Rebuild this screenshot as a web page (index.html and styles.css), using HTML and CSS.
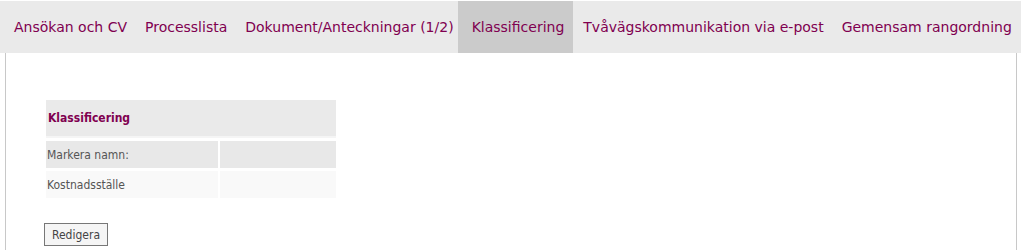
FILE: index.html
```html
<!DOCTYPE html>
<html lang="sv">
<head>
<meta charset="utf-8">
<title>Klassificering</title>
<link rel="stylesheet" href="styles.css">
</head>
<body>
<nav class="tabs">
  <a class="tab">Ansökan och CV</a>
  <a class="tab">Processlista</a>
  <a class="tab">Dokument/Anteckningar (1/2)</a>
  <a class="tab active">Klassificering</a>
  <a class="tab">Tvåvägskommunikation via e-post</a>
  <a class="tab">Gemensam rangordning</a>
</nav>
<main class="panel">
  <div class="box">
    <div class="box-head">Klassificering</div>
    <table class="grid">
      <tr class="odd"><td class="label">Markera namn:</td><td class="value"></td></tr>
      <tr class="even"><td class="label">Kostnadsställe</td><td class="value"></td></tr>
    </table>
  </div>
  <button class="btn" type="button">Redigera</button>
</main>
</body>
</html>
```
FILE: styles.css
```css
html, body {
  margin: 0;
  padding: 0;
  background: #fff;
}
body {
  font-family: "DejaVu Sans Condensed", "DejaVu Sans", sans-serif;
  padding-top: 1px;
}
.tabs {
  display: flex;
  height: 52px;
  background: #eaeaea;
  align-items: stretch;
}
.tab {
  display: flex;
  align-items: center;
  padding: 0 4px 0 14px;
  font-family: "DejaVu Sans", sans-serif;
  font-size: 14px;
  color: #800050;
  text-decoration: none;
  white-space: nowrap;
}
.tab.active {
  background: #cbcbcb;
  padding-right: 9px;
  margin-right: -4px;
}
.panel {
  margin: 0 4px 0 5px;
  border-left: 1px solid #c8c8c8;
  border-right: 1px solid #c8c8c8;
  height: 197px;
  padding: 47px 0 0 40px;
  box-sizing: border-box;
}
.box {
  width: 290px;
}
.box-head {
  background: #eaeaea;
  height: 38px;
  border-bottom: 2px solid #f5f5f5;
  box-sizing: border-box;
  display: flex;
  align-items: center;
  padding-left: 2px;
  font-size: 12px;
  font-weight: bold;
  color: #800050;
}
.grid {
  border-collapse: separate;
  border-spacing: 2px 3px;
  margin: 0 -2px;
  width: 294px;
  font-size: 12px;
  color: #555;
}
.grid td {
  height: 27px;
  box-sizing: border-box;
  padding: 0 0 0 1px;
}
.grid .label { width: 172px; }
.odd td { background: #e8e8e8; }
.even td { background: #f9f9f9; }
.btn {
  margin: 22px 0 0 -2px;
  display: block;
  height: 23px;
  padding: 0 7px;
  border: 1px solid #777;
  background: #f5f5f5;
  font-family: inherit;
  font-size: 12px;
  color: #444;
  border-radius: 0;
}
```
